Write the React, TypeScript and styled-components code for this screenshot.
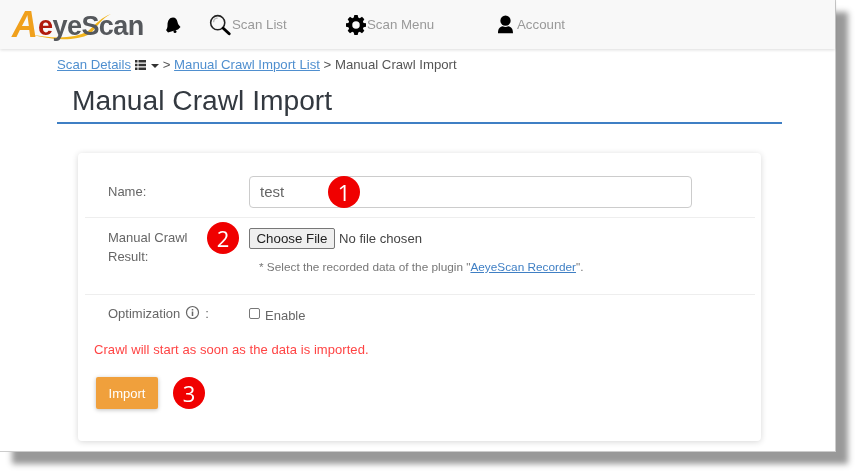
import React from "react";
import styled, { createGlobalStyle } from "styled-components";

const Global = createGlobalStyle`
  html, body { margin: 0; padding: 0; background: #fff; }
  body { width: 860px; height: 476px; overflow: hidden; font-family: "Liberation Sans", Arial, sans-serif; }
`;
const Frame = styled.div`
  width: 836px; height: 452px; background: #fff; box-shadow: 12px 12px 6px #999; position: relative;
  border-right: 1px solid #ccc; border-bottom: 1px solid #ccc; box-sizing: border-box; filter: blur(.35px);
`;
const Header = styled.header`
  height: 49px; background: #f8f8f8; box-shadow: 0 1px 3px rgba(0,0,0,.14);
  display: flex; align-items: center; box-sizing: border-box; padding: 0 0 0 12px;
`;
const Logo = styled.div`
  width: 132px; height: 40px; position: relative; display: flex; align-items: center; margin-right: 20px;
  font-weight: 700; font-size: 27px; letter-spacing: -0.55px; color: #55585c; transform: translateY(1px);
`;
const LogoSwoosh = styled.svg`position: absolute; left: 0; top: 0;`;
const LogoA = styled.span`color: #f0a01c; font-size: 36px; font-style: italic; position: relative; top: -1px; letter-spacing: 0;`;
const LogoE = styled.span`color: #b01a0c; position: relative; top: 1px;`;
const LogoRest = styled.span`position: relative; top: 1px;`;
const NavItem = styled.div<{ $w: number }>`
  width: ${p => p.$w}px; display: flex; align-items: center; gap: 1px; color: #999; font-size: 13.3px;
`;
const Main = styled.main`padding: 0 53px 0 57px;`;
const Crumbs = styled.div`
  height: 16px; margin-top: 8px; font-size: 13.2px; line-height: 16px; color: #555; display: flex; align-items: center; white-space: pre;
`;
const CrumbLink = styled.a`color: #4f8fcf; text-decoration: underline;`;
const Title = styled.h1`
  margin: 0; line-height: 54px; box-sizing: border-box; padding-left: 15px; font-size: 28.2px; font-weight: 400; color: #333940;
  border-bottom: 2px solid #3f7fc4; height: 51px;
`;
const Card = styled.section`
  width: 683px; height: 288px; margin: 29px 0 0 21px; background: #fff; border-radius: 4px; box-shadow: 0 1px 6px rgba(0,0,0,.16);
  box-sizing: border-box; padding: 0 6px 0 7px; color: #666; font-size: 13px;
`;
const Row = styled.div<{ $h: number; $line?: boolean }>`
  height: ${p => p.$h}px; box-sizing: border-box; display: grid; grid-template-columns: 141px 1fr 63px; padding-left: 23px;
  border-bottom: ${p => p.$line ? "1px solid #eeeeee" : "none"};
`;
const Label = styled.div<{ $top: number }>`padding-top: ${p => p.$top}px; line-height: 19px; position: relative;`;
const NameField = styled.div`
  margin-top: 23px; width: 443px; height: 32px; box-sizing: border-box; border: 1px solid #ccc; border-radius: 4px; padding: 0 10px;
  font-size: 15px; line-height: 29px; color: #666; position: relative;
`;
const Badge = styled.span<{ $x: number; $y: number }>`
  position: absolute; left: ${p => p.$x}px; top: ${p => p.$y}px; width: 32px; height: 32px; border-radius: 50%; background: #f00000; color: #fff;
  display: flex; align-items: center; justify-content: center; font: 400 22px/32px "Open Sans", sans-serif;
`;
const FileLine = styled.div`margin-top: 10px; display: flex; align-items: center; gap: 4px; color: #444; font-size: 13.1px; height: 21px;`;
const FileButton = styled.button`
  width: 86px; height: 21px; padding: 0; border: 1px solid #777; border-radius: 2px; background: #efefef; color: #222; font: 400 13.3px "Liberation Sans", sans-serif;
`;
const Hint = styled.div`margin: 11px 0 0 10px; font-size: 11.8px; line-height: 14px; color: #777;`;
const HintLink = styled.a`color: #3f7fc4; text-decoration: underline;`;
const Box = styled.span`
  width: 11px; height: 11px; border: 1px solid #777; border-radius: 2px; display: inline-block; box-sizing: border-box; margin-right: 5px; position: relative; top: -1px;
`;
const Enable = styled.div`padding-top: 12px; line-height: 18px; color: #666;`;
const Warning = styled.div`margin: 10px 0 0 9px; line-height: 16px; font-size: 13px; color: #f44; letter-spacing: .06px;`;
const ImportButton = styled.button`
  display: block; margin: 19px 0 0 11px; width: 62px; height: 32px; border: none; border-radius: 2px; background: #f0a03c; color: #fff;
  font: 400 13px "Liberation Sans", sans-serif; box-shadow: 0 1px 4px rgba(0,0,0,.25); padding: 0;
`;
const Wrapper = styled.div`position: relative;`;
const Info = styled.svg`vertical-align: -2px; margin: 0 5px 0 5px;`;

export default function App() {
  return (
    <>
      <Global />
      <Frame>
        <Header>
          <Logo>
            <LogoSwoosh width="132" height="40" viewBox="0 0 132 40">
              <path d="M18 28 C40 33 62 33 76 25 C84 18 90 11 99 8 C90 12 86 20 78 28 C62 36 38 34 18 28Z" fill="#f2b41c" />
            </LogoSwoosh>
            <LogoA>A</LogoA><LogoE>e</LogoE><LogoRest>yeScan</LogoRest>
          </Logo>
          <NavItem $w={45}>
            <svg width="18" height="18" viewBox="0 0 18 18"><path d="M9 1.500c2.500 0 4 2 4.500 4.500.4 2 1.500 3.500 3 5L14 13.500 4 16.500 2 14c1-1 1.500-2.500 1.500-5C3.500 5 5.500 1.500 9 1.500Z" fill="#000" /><circle cx="11" cy="15.500" r="1.500" fill="#000" /></svg>
          </NavItem>
          <NavItem $w={137}>
            <svg width="22" height="24" viewBox="0 0 24 26" fill="none"><g transform="translate(0 1)"><circle cx="9.500" cy="9.500" r="7.700" stroke="#222" strokeWidth="1.700" /><path d="M5 9c0-3 2-4.500 4.500-4.500" stroke="#bbb" strokeWidth="1.500" /><path d="M15.500 15.500 L22 21.500" stroke="#000" strokeWidth="3.200" strokeLinecap="round" /></g></svg>
            <span>Scan List</span>
          </NavItem>
          <NavItem $w={152}>
            <svg width="20" height="20" viewBox="0 0 24 24"><path fill="#000" fillRule="evenodd" d="M10 1h4l.7 3.100 1.800.8L19.200 3.200 22 6l-1.700 2.700.8 1.800L24 11v4l-2.900.6-.8 1.800L22 20l-2.800 2.800-2.700-1.700-1.800.8L14 25h-4l-.7-3.100-1.800-.8L4.800 22.800 2 20l1.700-2.600-.8-1.800L0 15v-4l2.900-.5.800-1.800L2 6l2.800-2.800 2.700 1.700 1.800-.8ZM12 8.500a4.500 4.500 0 1 0 0 9 4.500 4.500 0 0 0 0-9Z" transform="translate(0 -1)" /></svg>
            <span>Scan Menu</span>
          </NavItem>
          <NavItem $w={90}>
            <svg width="18" height="20" viewBox="1 0 19.200 21.300"><ellipse cx="9" cy="6" rx="5.500" ry="5.500" fill="#000" /><path d="M1 19.500c0-5 2-7 5-7.500 2 1 4 1 6 0 3 .5 5 2.500 5 7.500Z" fill="#000" /></svg>
            <span>Account</span>
          </NavItem>
        </Header>
        <Main>
          <Crumbs>
            <CrumbLink>Scan Details</CrumbLink>
            <svg width="28" height="12" viewBox="0 0 28 12" style={{ flex: "none" }}><path d="M4 1h2.500v2.500H4zM4 4.700h2.500v2.500H4zM4 8.400h2.500v2.500H4zM7.500 1H15v2.500H7.500zM7.500 4.700H15v2.500H7.500zM7.500 8.400H15v2.500H7.500zM20 5h8l-4 4z" fill="#333" /></svg>
            <span> &gt; </span>
            <CrumbLink>Manual Crawl Import List</CrumbLink>
            <span> &gt; Manual Crawl Import</span>
          </Crumbs>
          <Title>Manual Crawl Import</Title>
          <Card>
            <Row $h={65} $line>
              <Label $top={29}>Name:</Label>
              <NameField>test<Badge $x={78} $y={-1}>1</Badge></NameField>
            </Row>
            <Row $h={77} $line>
              <Label $top={10}>Manual Crawl<br />Result:<Badge $x={99} $y={4}>2</Badge></Label>
              <div>
                <FileLine><FileButton>Choose File</FileButton>No file chosen</FileLine>
                <Hint>* Select the recorded data of the plugin "<HintLink>AeyeScan Recorder</HintLink>".</Hint>
              </div>
            </Row>
            <Row $h={37}>
              <Label $top={9}>Optimization
                <Info width="15" height="15" viewBox="0 0 15 15" fill="none"><circle cx="7.500" cy="7.500" r="6" stroke="#666" strokeWidth="1.200" /><path d="M7.500 6.500V11M7.500 4v1.400" stroke="#666" strokeWidth="1.500" /></Info>:
              </Label>
              <Enable><Box />Enable</Enable>
            </Row>
            <Warning>Crawl will start as soon as the data is imported.</Warning>
            <Wrapper>
              <ImportButton>Import</ImportButton>
              <Badge $x={88} $y={0}>3</Badge>
            </Wrapper>
          </Card>
        </Main>
      </Frame>
    </>
  );
}
